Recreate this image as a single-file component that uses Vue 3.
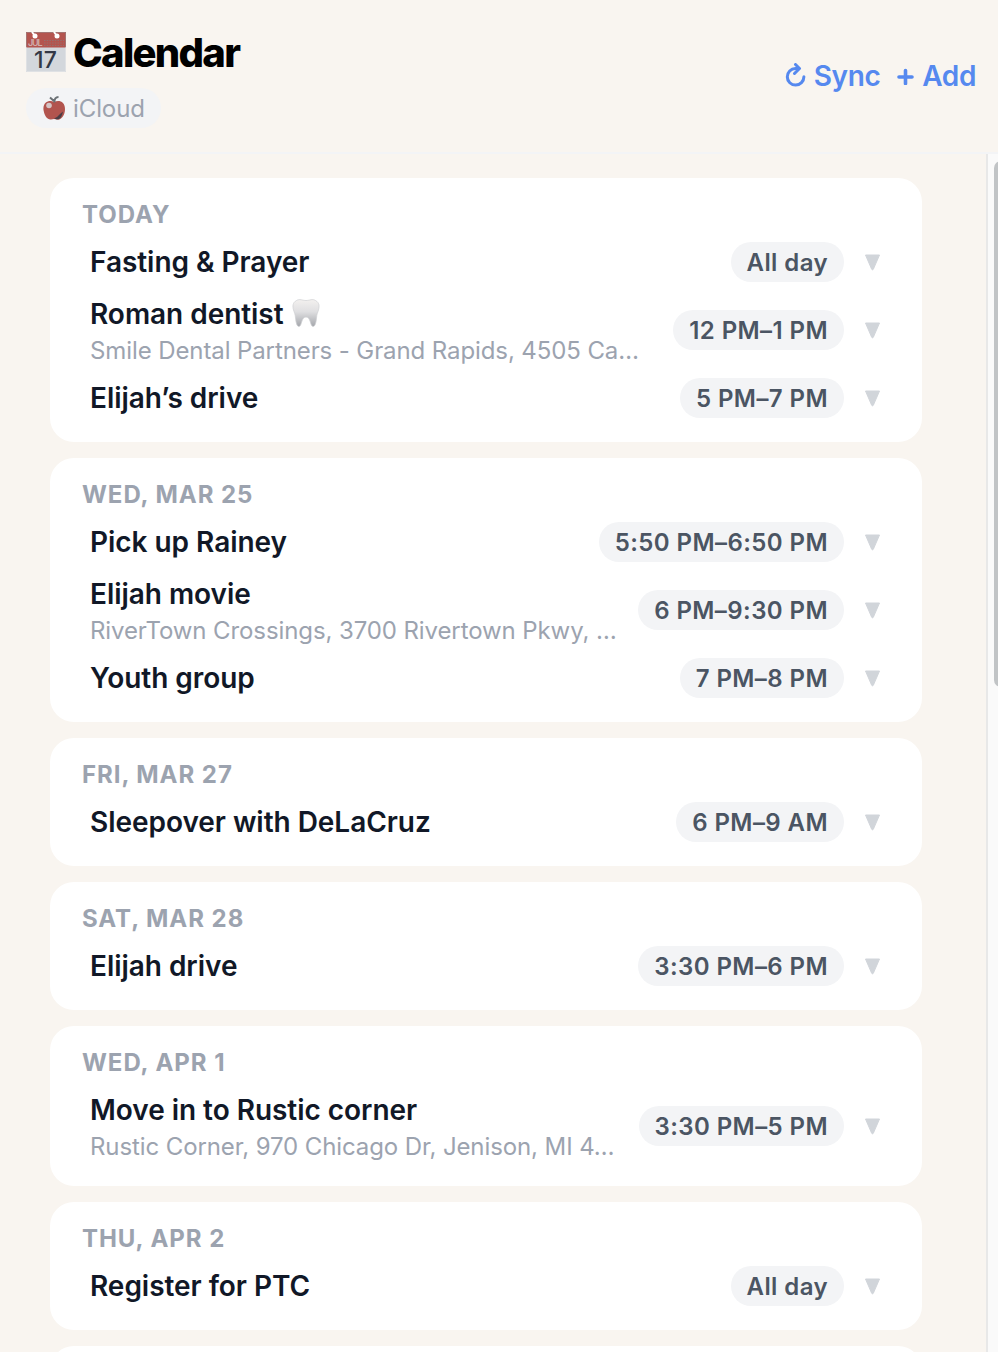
<script setup>
const days = [
  {
    label: 'TODAY',
    events: [
      { title: 'Fasting & Prayer', time: 'All day' },
      {
        title: 'Roman dentist',
        tooth: true,
        place: 'Smile Dental Partners - Grand Rapids, 4505 Ca…',
        time: '12 PM–1 PM',
      },
      { title: 'Elijah’s drive', time: '5 PM–7 PM' },
    ],
  },
  {
    label: 'WED, MAR 25',
    events: [
      { title: 'Pick up Rainey', time: '5:50 PM–6:50 PM' },
      {
        title: 'Elijah movie',
        place: 'RiverTown Crossings, 3700 Rivertown Pkwy, …',
        time: '6 PM–9:30 PM',
      },
      { title: 'Youth group', time: '7 PM–8 PM' },
    ],
  },
  {
    label: 'FRI, MAR 27',
    events: [{ title: 'Sleepover with DeLaCruz', time: '6 PM–9 AM' }],
  },
  {
    label: 'SAT, MAR 28',
    events: [{ title: 'Elijah drive', time: '3:30 PM–6 PM' }],
  },
  {
    label: 'WED, APR 1',
    events: [
      {
        title: 'Move in to Rustic corner',
        place: 'Rustic Corner, 970 Chicago Dr, Jenison, MI 4…',
        time: '3:30 PM–5 PM',
      },
    ],
  },
  {
    label: 'THU, APR 2',
    events: [{ title: 'Register for PTC', time: 'All day' }],
  },
  { label: '', events: [] },
]
</script>

<template>
  <div class="calendar">
    <header class="header">
      <div>
        <h1 class="header__title">
          <svg class="header__icon" width="40" height="40" viewBox="0 0 40 40">
            <rect width="40" height="40" fill="#d3d7dc" />
            <rect width="40" height="15.5" fill="#b4544e" />
            <path d="M.5 15V.5h39V15" fill="none" stroke="#a37472" />
            <path d="M.5 15.5V39.5h39V15.5" fill="none" stroke="#dfe1e4" />
            <path d="M6 0l3 4M28 0l3 4" stroke="#fff" stroke-width="2" />
            <circle cx="9" cy="4" r="2.5" fill="#fff" />
            <circle cx="31" cy="4" r="2.5" fill="#fff" />
            <path d="M18 8.500h20M18 11h20M18 13.500h20" stroke="#94706f" stroke-width="1.200" stroke-dasharray="1.500 1.200" />
            <text x="2" y="13.5" font-size="9" font-weight="600" textLength="14.500" fill="#d0aeac">JUL</text>
            <text x="8" y="36" font-size="23" font-weight="500" textLength="23" fill="#343845">17</text>
          </svg>
          <span>Calendar</span>
        </h1>
        <div class="source">
          <svg width="23" height="24" viewBox="0 0 23 24">
            <path
              d="M11 6C7 3.500-.5 5.500.5 14c1 6 4 10 7.500 9.500 2-.8 4-.8 6 0 4 1 8-4 8-10.500C22 5.500 16 3.500 11 6z"
              fill="#b2544e"
            />
            <path d="M11 22.500l3-1.500 3-3 3-2.500c-1 5-3 8-6 8z" fill="#4b3d45" />
            <path d="M11.500 6.500C11 3 13 1 15.500 1M11 5L7 1.500" fill="none" stroke="#6b7175" stroke-width="2" />
            <circle cx="6" cy="9.500" r="2.800" fill="#d5c4c5" />
          </svg>
          <span>iCloud</span>
        </div>
      </div>
      <nav class="actions">
        <button class="actions__btn" type="button">
          <svg width="22" height="26" viewBox="0 0 22 26">
            <path
              d="M13 5.500h-2.500a8.300 8.300 0 1 0 8.400 8.300"
              fill="none"
              stroke="#5689ef"
              stroke-width="3"
              stroke-linecap="round"
            />
            <path
              d="M10.500 1.500l4 4-5 5"
              fill="none"
              stroke="#5689ef"
              stroke-width="3"
              stroke-linecap="round"
              stroke-linejoin="round"
            />
          </svg>
          <span>Sync</span>
        </button>
        <button class="actions__btn" type="button">
          <svg width="18" height="18" viewBox="0 0 18 18">
            <path d="M2 10h13M8.500 3.500v13" stroke="#5689ef" stroke-width="3.600" stroke-linecap="round" />
          </svg>
          <span>Add</span>
        </button>
      </nav>
    </header>

    <div class="body">
      <main class="days">
        <section v-for="(day, i) in days" :key="i" class="day">
          <h2 class="day__label">{{ day.label }}</h2>
          <div v-for="event in day.events" :key="event.title" class="event">
            <div class="event__info">
              <div class="event__title">
                {{ event.title }}
                <svg v-if="event.tooth" width="28" height="30" viewBox="0 0 28 30">
                  <defs>
                    <linearGradient id="enamel" x1="0" y1="0" x2="0" y2="1">
                      <stop offset="0" stop-color="#f3f1ef" />
                      <stop offset=".45" stop-color="#dfdfe1" />
                      <stop offset="1" stop-color="#a4a6ab" />
                    </linearGradient>
                  </defs>
                  <path
                    d="M4.500 1.500c3-2 6 0 9.500 0s6.500-2 9.500 0c4 2 4 6 3 9.500-1 3-1.700 4-2 8-.4 5-1.500 8.500-3.500 8.500-3 0-2-9.500-7-9.500s-4 9.500-7 9.500c-2 0-3-3.500-3.500-8.500-.3-4-1-5-2-8-1-3.500-1-7.500 3-9.500z"
                    fill="url(#enamel)"
                    stroke="#cfd0d3"
                    stroke-width=".7"
                  />
                </svg>
              </div>
              <div v-if="event.place" class="event__place">{{ event.place }}</div>
            </div>
            <span class="event__time">{{ event.time }}</span>
            <svg class="event__arrow" width="18" height="18" viewBox="0 0 18 18">
              <path d="M1.500 2h14L9.300 16.300q-.8 1-1.600 0z" fill="#d1d5da" stroke="#d1d5da" stroke-linejoin="round" />
            </svg>
          </div>
        </section>
      </main>
      <div class="scrollbar"><div class="scrollbar__thumb"></div></div>
    </div>
  </div>
</template>

<style>
body {
  margin: 0;
  overflow: hidden;
}
</style>

<style scoped>
.calendar {
  display: flex;
  flex-direction: column;
  height: 1352px;
  overflow: hidden;
  background: #f9f5f0;
  font-family: Inter, "Liberation Sans", sans-serif;
}
.header {
  display: flex;
  flex: none;
  justify-content: space-between;
  box-sizing: border-box;
  height: 154px;
  padding: 32px 22px 0 26px;
  border-bottom: 2px solid #f3f4f6;
}
.header__title {
  display: flex;
  align-items: center;
  gap: 7px;
  height: 40px;
  margin: 0;
  color: #000;
  font-size: 40px;
  font-weight: 800;
  letter-spacing: -1.7px;
}
.header__icon {
  flex: none;
  overflow: visible;
  letter-spacing: 0;
}
.source {
  display: flex;
  align-items: center;
  gap: 7px;
  box-sizing: border-box;
  width: 135px;
  height: 40px;
  margin-top: 16px;
  padding-left: 17px;
  border-radius: 20px;
  background: #f3f4f6;
  color: #9ca3af;
  font-size: 24px;
  letter-spacing: -0.1px;
}
.actions {
  display: flex;
  align-items: center;
  gap: 17px;
  height: 88px;
}
.actions__btn {
  display: flex;
  align-items: center;
  gap: 7px;
  padding: 0;
  border: none;
  background: none;
  color: #5689ef;
  font-family: inherit;
  font-size: 28px;
  font-weight: 600;
  letter-spacing: -0.4px;
  cursor: pointer;
}
.body {
  display: flex;
  flex: 1;
  min-height: 0;
}
.days {
  display: flex;
  flex: 1;
  flex-direction: column;
  gap: 16px;
  padding: 24px 64px 0 50px;
}
.day {
  flex: none;
  padding: 20px 32px 18px;
  border-radius: 24px;
  background: #fff;
}
.day__label {
  height: 38px;
  margin: 0;
  color: #9ca3af;
  font-size: 24px;
  font-weight: 700;
  line-height: 34px;
  letter-spacing: 0.95px;
}
.event {
  display: flex;
  align-items: center;
  padding: 6px 8px;
}
.event__info {
  flex: 1;
  min-width: 0;
  white-space: nowrap;
}
.event__title {
  display: flex;
  align-items: center;
  gap: 8px;
  height: 40px;
  color: #111827;
  font-size: 28px;
  font-weight: 600;
  letter-spacing: -0.04px;
}
.event__place {
  height: 32px;
  color: #9ca3af;
  font-size: 24px;
  line-height: 34px;
  letter-spacing: -0.1px;
}
.event__time {
  box-sizing: border-box;
  height: 40px;
  padding: 1px 16px 0;
  border-radius: 20px;
  background: #f3f4f6;
  color: #4b5563;
  font-size: 24px;
  font-weight: 600;
  line-height: 40px;
  letter-spacing: 0.42px;
  white-space: nowrap;
}
.event__arrow {
  margin-left: 20px;
}
.scrollbar {
  box-sizing: border-box;
  width: 12px;
  padding: 7px 0 0 6px;
  border-left: 2px solid #e8e8e8;
  background: #fafafa;
  overflow: hidden;
}
.scrollbar__thumb {
  width: 14px;
  height: 526px;
  border-radius: 7px;
  background: #c1c4c6;
}
</style>
